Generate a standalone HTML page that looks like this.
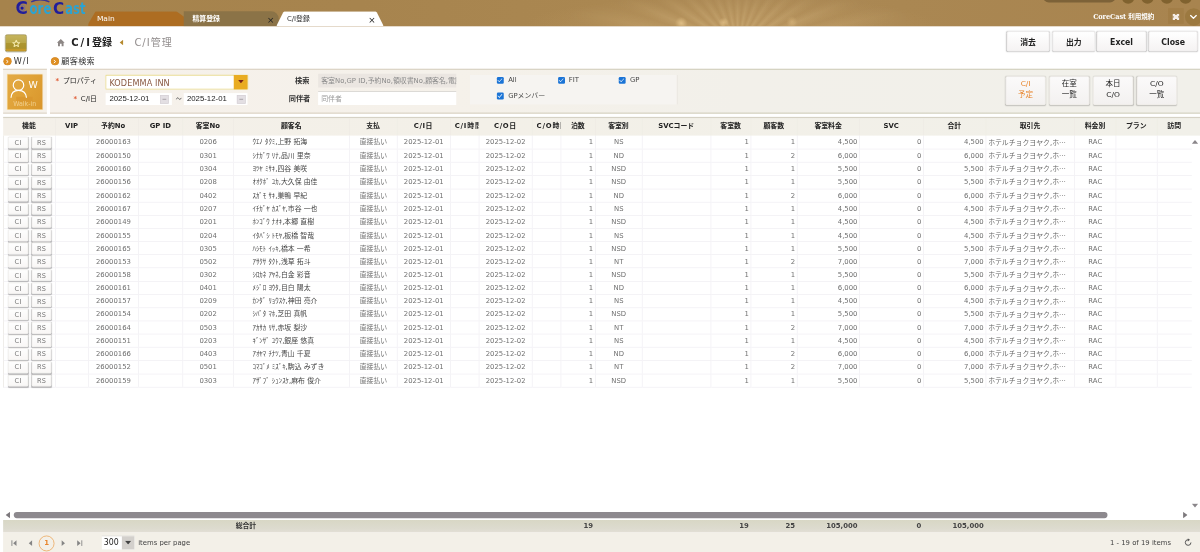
<!DOCTYPE html>
<html lang="ja">
<head>
<meta charset="utf-8">
<title>C/I登録</title>
<style>
*{box-sizing:border-box;margin:0;padding:0}
html,body{width:1200px;height:552px;overflow:hidden;background:#fff}
body{font-family:"DejaVu Sans","Liberation Sans","Noto Sans CJK JP",sans-serif;font-size:11px;color:#333}
#app{position:absolute;left:0;top:0;width:1920px;height:883.2px;transform:scale(.625);transform-origin:0 0;background:#fff;overflow:hidden}
.abs{position:absolute}
/* ---------- header ---------- */
#hdr{position:absolute;left:0;top:0;width:1920px;height:42px;background:#a8854f;overflow:hidden}
#hdr .glow{position:absolute;left:0;top:0;width:1920px;height:42px;background:
 radial-gradient(circle 10px at 1090px 37px,rgba(232,198,140,.75),rgba(232,198,140,0) 100%),
 radial-gradient(circle 8px at 1158px 36px,rgba(232,198,140,.7),rgba(232,198,140,0) 100%),
 radial-gradient(circle 9px at 1267px 35px,rgba(222,188,130,.55),rgba(222,188,130,0) 100%),
 radial-gradient(ellipse 330px 46px at 1170px 40px,rgba(196,160,104,.55),rgba(196,160,104,0) 100%),
 linear-gradient(90deg,#a6834c 0,#a7844e 30%,#aa8751 50%,#ac8955 62%,#aa8752 75%,#a8844f 100%)}
#hdr .rays{position:absolute;left:860px;top:0;width:640px;height:42px;background:repeating-conic-gradient(from -82deg at 320px 78px,rgba(255,232,180,0) 0deg,rgba(255,232,180,.16) 5deg,rgba(255,232,180,0) 11deg);-webkit-mask-image:radial-gradient(ellipse 300px 60px at 320px 42px,#000 0,rgba(0,0,0,.6) 50%,transparent 100%);mask-image:radial-gradient(ellipse 300px 60px at 320px 42px,#000 0,rgba(0,0,0,.6) 50%,transparent 100%)}
.tab{position:absolute;top:18px;height:24px;color:#fff;font-size:11px;line-height:24px}
#tab1{left:141px;width:154px;background:#ad6d22;font-size:12px;clip-path:polygon(0 100%,0 85%,12px 0,141px 0,154px 38%,154px 100%)}
#tab1 span{position:absolute;left:14px;top:0}
#tab2{left:294px;width:152px;background:#8b7347;border-radius:0 12px 0 0}
#tab2 span{position:absolute;left:14px;top:0;font-weight:bold}
#tab3{left:442px;width:172px;background:#fff;color:#333;clip-path:polygon(0 100%,11px 2px,13px 0,159px 0,161px 2px,100% 100%)}
#tab3 span{position:absolute;left:17px;top:0}
.tab i{position:absolute;top:1.5px;font-style:normal;font-size:14px;color:#222;font-weight:normal}
#hdr .terms{position:absolute;left:1749px;top:19px;color:#fff;font-weight:bold;font-size:10.5px;letter-spacing:-.1px;line-height:16px;white-space:nowrap;font-family:"DejaVu Serif","Liberation Serif","Noto Sans CJK JP",serif}
/* ---------- title row ---------- */
#star{position:absolute;left:8px;top:55px;width:35px;height:27.5px;border-radius:3.5px;background:linear-gradient(#c5b45f 0,#bba849 47%,#ad9631 52%,#ab922d 82%,#c4992a 88%,#c4992a 100%);border:1px solid #8f7f3a;box-shadow:0 1px 1px rgba(0,0,0,.2)}
#title{position:absolute;left:114px;top:57px;font-size:16px;font-weight:bold;color:#222;line-height:24px;white-space:nowrap;letter-spacing:0}
#sub{position:absolute;left:215px;top:57px;font-size:16px;color:#928d8d;line-height:24px;white-space:nowrap;letter-spacing:1.6px}
.tbtn{position:absolute;top:50px;height:32px;border:1px solid #e8e6e6;border-radius:3px;background:linear-gradient(#fff,#f5f3f3);box-shadow:0 1px 2px rgba(0,0,0,.26);font-weight:bold;font-size:12.5px;line-height:33.6px;overflow:hidden;text-align:center;color:#222}
/* ---------- links row ---------- */
.lnk{position:absolute;top:89.5px;height:18px;line-height:18px;font-size:13px;color:#333;white-space:nowrap}
.dot{position:absolute;top:92px;width:12px;height:12px;border-radius:50%;background:#df8f22;box-shadow:0 0 0 .5px #c98224}
/* ---------- search panel ---------- */
.panel{position:absolute;top:110.4px;height:71.9px;background:#f5f1ea;border-top:2px solid #dad4ca;border-bottom:2px solid #ddd8ce}
.lab{position:absolute;font-size:11.5px;font-weight:bold;color:#333;white-space:nowrap;line-height:16px}
.lab.n{font-weight:normal;font-size:11px;color:#222;text-align:right;width:100px}
.lab em{font-style:normal;color:#e0603a;margin-right:6px;font-weight:bold}
.inp{position:absolute;background:#fff;font-size:12px;line-height:20px;color:#333;white-space:nowrap;overflow:hidden}
.cb{position:absolute;width:11px;height:11px;border-radius:2px;background:#1b74d6}
.cb:after{content:"";position:absolute;left:3.4px;top:1.2px;width:3px;height:5.6px;border:solid #fff;border-width:0 1.6px 1.6px 0;transform:rotate(42deg)}
.cbl{position:absolute;font-size:11px;color:#444;line-height:14px;white-space:nowrap}
.pbtn{position:absolute;top:122px;width:64px;height:46px;border:1px solid #efece9;border-radius:3px;background:linear-gradient(#fbfafa,#f3f1f0);box-shadow:0 1px 2px rgba(0,0,0,.22);font-size:12px;line-height:17.6px;text-align:center;color:#222;padding-top:2px}
/* ---------- grid ---------- */
#grid{position:absolute;left:5px;top:186.7px;width:1915px;height:697.3px}
#gh{position:absolute;left:0;top:0;width:1915px;height:30.8px;background:linear-gradient(90deg,#f4f0e9 0,#f3f0e8 40%,#f1f0e9 100%);border-top:2px solid #d6d2c5;overflow:hidden}
table{border-collapse:collapse;table-layout:fixed;width:1901px}
th{height:28.8px;font-size:11px;font-weight:bold;color:#222;text-align:center;white-space:nowrap;overflow:hidden;border-left:1px solid #eeebe4;padding:0 4px;vertical-align:middle}
th:first-child{border-left:none}
th.clip{padding:0 0 0 7px;text-align:left}
th.clip span{letter-spacing:1.3px}
th span{display:block;overflow:hidden;white-space:nowrap;position:relative;top:-.8px;line-height:16px;height:16px}
#gb{position:absolute;left:0;top:30.8px;width:1901px}
td{height:21.15px;font-size:11px;color:#707070;white-space:nowrap;overflow:hidden;border-left:1px solid #eeecf1;border-bottom:1px solid #eeecf1;padding:0 6px;line-height:19px}
td.c{text-align:center}
td.r{text-align:right;padding-right:3px}
td.nm{padding-left:30px;padding-right:0;color:#444;font-size:11px}
td.tk{padding-left:3px;padding-right:0;color:#666}
td.tk i{font-style:normal;font-family:'Noto Sans CJK JP',sans-serif}
td.fn{overflow:visible;padding:0 0 0 7.4px;border-left:1px solid #e6e3de;letter-spacing:.6px}
.gb{display:inline-block;width:31.5px;height:18.5px;margin:.6px 6px 0 0;border:1px solid #edebe9;border-radius:2px;background:linear-gradient(#fefefe,#f9f7f6);box-shadow:0 1.5px 1.5px rgba(0,0,0,.26);font-weight:normal;font-size:10.5px;line-height:17px;text-align:center;color:#777;vertical-align:top}
/* footer */
#hs{position:absolute;left:0;top:818px;width:1920px;height:12px;background:#fff}
#hs .th{position:absolute;left:22px;top:1px;width:1750px;height:10px;border-radius:5px;background:#8d898e}
#tot{position:absolute;left:5px;top:831.6px;width:1915px;height:20.4px;background:linear-gradient(#d8d7c5,#dddbcf 70%,#e3dfd6)}
#tot td{height:20px;border:none;font-weight:bold;color:#444;line-height:18px}
#pg{position:absolute;left:5px;top:852px;width:1915px;height:33px;background:#f3f0e8}
</style>
</head>
<body>
<div id="app">

<div id="hdr">
  <div class="glow"></div><div class="rays"></div>
  <!-- top-right decoration -->
  <div class="abs" style="left:1669px;top:-14px;width:116px;height:18px;border-radius:9px;background:#7d6238"></div>
  <div class="abs" style="left:1795px;top:-14px;width:20px;height:20px;border-radius:50%;background:#80622f"></div>
  <div class="abs" style="left:1826px;top:-14px;width:20px;height:20px;border-radius:50%;background:#80622f"></div>
  <div class="abs" style="left:1857px;top:-14px;width:20px;height:20px;border-radius:50%;background:#80622f"></div>
  <div class="abs" style="left:1887px;top:-14px;width:20px;height:20px;border-radius:50%;background:#80622f"></div>
  <!-- logo -->
  <svg class="abs" style="left:0;top:0" width="150" height="28" viewBox="0 0 150 28">
    <path d="M50 3 Q64 -3.5 79 3" fill="none" stroke="#3d3390" stroke-width="2.4"/>
    <text transform="translate(24.6,22.6) scale(1.0,1)" font-family="'DejaVu Sans','Liberation Sans',sans-serif" font-weight="bold" font-size="27" fill="#211d9b">C</text>
    <circle cx="35.3" cy="12.8" r="4.6" fill="none" stroke="#6d68a8" stroke-width="1.2"/>
    <circle cx="35.3" cy="12.8" r="2.6" fill="#1a169e"/>
    <text transform="translate(47.2,22.3) scale(.77,1)" font-family="'DejaVu Sans','Liberation Sans',sans-serif" font-weight="bold" font-size="24.5" fill="#2ba3d2">ore</text>
    <text transform="translate(84.8,22.4) scale(.92,1)" font-family="'DejaVu Sans','Liberation Sans',sans-serif" font-weight="bold" font-size="26.5" fill="#211d9b">C</text>
    <text transform="translate(104.3,22.3) scale(.76,1)" font-family="'DejaVu Sans','Liberation Sans',sans-serif" font-weight="bold" font-size="24.5" fill="#2ba3d2">ast</text>
  </svg>
  <div class="tab" id="tab1"><span>Main</span></div>
  <div class="tab" id="tab2"><span>精算登録</span><i style="left:133px">×</i></div>
  <div class="tab" id="tab3"><span>C/I登録</span><i style="left:147px">×</i></div>
  <div class="terms">CoreCast 利用規約</div>
  <div class="abs" style="left:1869px;top:13px;width:25px;height:25px;background:rgba(120,85,20,.12)"></div>
  <svg class="abs" style="left:1876px;top:22px" width="11" height="10" viewBox="0 0 11 10"><rect x="0" y="0" width="11" height="10" rx="1" fill="#f4ece6"/><rect x="4" y="0" width="3" height="1.6" fill="#9b7840"/><rect x="4" y="8.4" width="3" height="1.6" fill="#9b7840"/><rect x="0" y="3.6" width="1.6" height="2.8" fill="#9b7840"/><rect x="9.4" y="3.6" width="1.6" height="2.8" fill="#9b7840"/></svg>
  <div class="abs" style="left:1896px;top:13px;width:28px;height:28px;border-radius:50%;background:#9c7940"></div>
  <svg class="abs" style="left:1903px;top:23px" width="13" height="9" viewBox="0 0 14 10"><path d="M2 2 L7 7 L12 2" fill="none" stroke="#fff" stroke-width="2.2" stroke-linecap="round" stroke-linejoin="round"/></svg>
</div>

<!-- title row -->
<div id="star"><svg class="abs" style="left:10px;top:7px" width="14" height="13" viewBox="0 0 16 16" preserveAspectRatio="none"><path d="M8 1.8 L9.9 6 L14.4 6.5 L11 9.5 L12 14 L8 11.7 L4 14 L5 9.5 L1.6 6.5 L6.1 6 Z" fill="none" stroke="#f3e9ad" stroke-width="1.9" stroke-linejoin="round"/></svg></div>
<svg class="abs" style="left:90px;top:60.5px" width="14.5" height="14.5" viewBox="0 0 14 14"><path d="M1 7.2 L7 1.5 L13 7.2 L11.3 7.2 L11.3 12.5 L8.3 12.5 L8.3 8.8 L5.7 8.8 L5.7 12.5 L2.7 12.5 L2.7 7.2 Z" fill="#8d8785"/></svg>
<div id="title"><span style="letter-spacing:3.2px">C/I</span>登録</div>
<svg class="abs" style="left:190px;top:62px" width="8" height="12" viewBox="0 0 8 12"><path d="M7 1.5 L1.5 6 L7 10.5 Z" fill="#b5892e"/></svg>
<div id="sub">C/I管理</div>
<div class="tbtn" style="left:1611px;width:68px">消去</div>
<div class="tbtn" style="left:1684px;width:68px">出力</div>
<div class="tbtn" style="left:1755px;width:79px">Excel</div>
<div class="tbtn" style="left:1838px;width:78px">Close</div>

<!-- links row -->
<div class="dot" style="left:5.5px"><svg class="abs" style="left:2.5px;top:2.5px" width="7" height="7" viewBox="0 0 7 7"><path d="M2 1 L5 3.5 L2 6" fill="none" stroke="#fff" stroke-width="1.5"/></svg></div>
<div class="lnk" style="left:22px;letter-spacing:1.4px">W/I</div>
<div class="dot" style="left:81.5px"><svg class="abs" style="left:2.5px;top:2.5px" width="7" height="7" viewBox="0 0 7 7"><path d="M2 1 L5 3.5 L2 6" fill="none" stroke="#fff" stroke-width="1.5"/></svg></div>
<div class="lnk" style="left:98px;letter-spacing:.5px">顧客検索</div>

<!-- search panel -->
<div class="panel" style="left:5px;width:70px;border-top-color:#e0d6c7;border-bottom-color:#e0d8cc"></div>
<div class="panel" style="left:80px;width:1840px;background:linear-gradient(90deg,#f6f1eb 0,#f5f1ea 35%,#f2f0ea 60%,#f1f0ea 100%);border-width:2px 0;border-style:solid;border-image:linear-gradient(90deg,#e0d6c8 0,#dcd5c7 30%,#d5d3c2 60%,#d6d4c4 100%) 1"></div>
<div class="abs" id="wi" style="left:11.5px;top:118.5px;width:56px;height:56px;box-shadow:0 0 0 1px #f9e6b4;background:linear-gradient(120deg,#e3aa44 0,#dfa136 55%,#d9962c 100%);">
  <svg class="abs" style="left:0;top:0" width="56" height="56" viewBox="0 0 56 56"><rect x="14" y="36" width="26" height="8" fill="#d8942c" opacity=".7"/><circle cx="17.6" cy="17.2" r="8.4" fill="none" stroke="#fff" stroke-width="1.9"/><path d="M5.6 37.5 C6 28.5 11 25.6 17.6 25.6 C24.2 25.6 29.6 28.5 30.4 37.5" fill="none" stroke="#fff" stroke-width="1.9"/></svg>
  <div class="abs" style="left:34px;top:6px;font-size:15px;line-height:20px;color:#fff">W</div>
  <div class="abs" style="left:0;top:40px;width:56px;text-align:center;font-size:10px;line-height:14px;color:#f1cf8e">Walk-in</div>
</div>

<div class="lab n" style="left:55px;top:121px"><em>*</em>プロパティ</div>
<div class="lab n" style="left:55px;top:150px"><em>*</em>C/I日</div>
<div class="inp" style="left:169px;top:120px;width:227px;height:23px;border:1px solid #e6d680;box-shadow:0 0 2px #e8da8c;padding-left:5px;font-size:13px;line-height:23px;letter-spacing:.15px;color:#8a5a44">KODEMMA INN</div>
<div class="abs" style="left:374px;top:120px;width:22px;height:22.5px;background:#e9ac22"><svg class="abs" style="left:6.5px;top:8px" width="9" height="5.4" viewBox="0 0 10 6"><path d="M0 0 H10 L5 6 Z" fill="#7a2318"/></svg></div>
<div class="inp" style="left:169px;top:149px;width:106px;height:19px;padding-left:6px;font-family:'Liberation Sans',sans-serif;font-size:12.5px;line-height:19px;color:#222">2025-12-01</div>
<div class="abs" style="left:256px;top:152px;width:14px;height:14px;background:#e3dfe3;border:1px solid #d5d0d5"><div class="abs" style="left:3px;top:5px;width:6px;height:1.5px;background:#b5b0b5"></div></div>
<svg class="abs" style="left:281px;top:155px" width="10" height="6" viewBox="0 0 10 6"><path d="M1 4 C2.5 0.5 4 1 5 2.8 C6 4.6 7.5 5 9 1.6" fill="none" stroke="#555" stroke-width="1.3"/></svg>
<div class="inp" style="left:294px;top:149px;width:102px;height:19px;padding-left:5px;font-family:'Liberation Sans',sans-serif;font-size:12.5px;line-height:19px;color:#222">2025-12-01</div>
<div class="abs" style="left:379px;top:152px;width:14px;height:14px;background:#e3dfe3;border:1px solid #d5d0d5"><div class="abs" style="left:3px;top:5px;width:6px;height:1.5px;background:#b5b0b5"></div></div>

<div class="lab" style="left:472px;top:121px">検索</div>
<div class="lab" style="left:462px;top:150px">同伴者</div>
<div class="inp" style="left:509px;top:118px;width:221px;height:22px;background:#ebe6e1;color:#8a8a8a;font-size:11px;line-height:22px;padding-left:5px">客室No,GP ID,予約No,領収書No,顧客名,電話番号</div>
<div class="inp" style="left:509px;top:146px;width:221px;height:22px;color:#999;font-size:11px;line-height:22px;padding-left:5px;border-top:1px solid #c9c5c0">同伴者</div>

<div class="abs" style="left:752px;top:120px;width:332px;height:47px;background:#f6f4f1;border-right:1px solid #e4e0d8"></div>
<div class="cb" style="left:795px;top:123px"></div><div class="cbl" style="left:813px;top:121px">All</div>
<div class="cb" style="left:893px;top:123px"></div><div class="cbl" style="left:910px;top:121px">FIT</div>
<div class="cb" style="left:990px;top:123px"></div><div class="cbl" style="left:1008px;top:121px">GP</div>
<div class="cb" style="left:795px;top:148px"></div><div class="cbl" style="left:813px;top:147px">GPメンバー</div>

<div class="pbtn" style="left:1609px;color:#e8862e">C/I<br>予定</div>
<div class="pbtn" style="left:1679px">在室<br>一覧</div>
<div class="pbtn" style="left:1749px">本日<br>C/O</div>
<div class="pbtn" style="left:1819px">C/O<br>一覧</div>

<!-- grid -->
<div id="grid">
  <div id="gh"><table><colgroup><col style="width:83px"><col style="width:53px"><col style="width:80px"><col style="width:71px"><col style="width:81px"><col style="width:186px"><col style="width:76px"><col style="width:85px"><col style="width:46px"><col style="width:85px"><col style="width:46px"><col style="width:55px"><col style="width:75px"><col style="width:110px"><col style="width:64px"><col style="width:74px"><col style="width:100px"><col style="width:102px"><col style="width:100px"><col style="width:142px"><col style="width:66px"><col style="width:66px"><col style="width:55px"></colgroup><tr><th><span>機能</span></th><th><span>VIP</span></th><th><span>予約No</span></th><th><span>GP ID</span></th><th><span>客室No</span></th><th><span>顧客名</span></th><th><span>支払</span></th><th><span style="letter-spacing:.9px">C/I日</span></th><th class="clip"><span>C/I時間</span></th><th><span style="letter-spacing:.9px">C/O日</span></th><th class="clip"><span>C/O時間</span></th><th><span>泊数</span></th><th><span>客室別</span></th><th><span>SVCコード</span></th><th><span>客室数</span></th><th><span>顧客数</span></th><th><span>客室料金</span></th><th><span>SVC</span></th><th><span>合計</span></th><th><span>取引先</span></th><th><span>料金別</span></th><th><span>プラン</span></th><th><span>訪問</span></th></tr></table></div>
  <div id="gb"><table><colgroup><col style="width:83px"><col style="width:53px"><col style="width:80px"><col style="width:71px"><col style="width:81px"><col style="width:186px"><col style="width:76px"><col style="width:85px"><col style="width:46px"><col style="width:85px"><col style="width:46px"><col style="width:55px"><col style="width:75px"><col style="width:110px"><col style="width:64px"><col style="width:74px"><col style="width:100px"><col style="width:102px"><col style="width:100px"><col style="width:142px"><col style="width:66px"><col style="width:66px"><col style="width:55px"></colgroup>
<tr><td class="fn"><b class="gb">CI</b><b class="gb">RS</b></td><td></td><td class="c">26000163</td><td></td><td class="c">0206</td><td class="nm">ｳｴﾉ ﾀｸﾐ,上野 拓海</td><td class="c">直接払い</td><td class="c">2025-12-01</td><td></td><td class="c">2025-12-02</td><td></td><td class="r">1</td><td class="c">NS</td><td></td><td class="r">1</td><td class="r">1</td><td class="r">4,500</td><td class="r">0</td><td class="r">4,500</td><td class="tk">ホテルチョクヨヤク,ホ<i>…</i></td><td class="c">RAC</td><td></td><td></td></tr>
<tr><td class="fn"><b class="gb">CI</b><b class="gb">RS</b></td><td></td><td class="c">26000150</td><td></td><td class="c">0301</td><td class="nm">ｼﾅｶﾞﾜ ﾘﾅ,品川 里奈</td><td class="c">直接払い</td><td class="c">2025-12-01</td><td></td><td class="c">2025-12-02</td><td></td><td class="r">1</td><td class="c">ND</td><td></td><td class="r">1</td><td class="r">2</td><td class="r">6,000</td><td class="r">0</td><td class="r">6,000</td><td class="tk">ホテルチョクヨヤク,ホ<i>…</i></td><td class="c">RAC</td><td></td><td></td></tr>
<tr><td class="fn"><b class="gb">CI</b><b class="gb">RS</b></td><td></td><td class="c">26000160</td><td></td><td class="c">0304</td><td class="nm">ﾖﾂﾔ ﾐｻｷ,四谷 美咲</td><td class="c">直接払い</td><td class="c">2025-12-01</td><td></td><td class="c">2025-12-02</td><td></td><td class="r">1</td><td class="c">NSD</td><td></td><td class="r">1</td><td class="r">1</td><td class="r">5,500</td><td class="r">0</td><td class="r">5,500</td><td class="tk">ホテルチョクヨヤク,ホ<i>…</i></td><td class="c">RAC</td><td></td><td></td></tr>
<tr><td class="fn"><b class="gb">CI</b><b class="gb">RS</b></td><td></td><td class="c">26000156</td><td></td><td class="c">0208</td><td class="nm">ｵｵｸﾎﾞ ﾕｶ,大久保 由佳</td><td class="c">直接払い</td><td class="c">2025-12-01</td><td></td><td class="c">2025-12-02</td><td></td><td class="r">1</td><td class="c">NSD</td><td></td><td class="r">1</td><td class="r">1</td><td class="r">5,500</td><td class="r">0</td><td class="r">5,500</td><td class="tk">ホテルチョクヨヤク,ホ<i>…</i></td><td class="c">RAC</td><td></td><td></td></tr>
<tr><td class="fn"><b class="gb">CI</b><b class="gb">RS</b></td><td></td><td class="c">26000162</td><td></td><td class="c">0402</td><td class="nm">ｽｶﾞﾓ ｻｷ,巣鴨 早紀</td><td class="c">直接払い</td><td class="c">2025-12-01</td><td></td><td class="c">2025-12-02</td><td></td><td class="r">1</td><td class="c">ND</td><td></td><td class="r">1</td><td class="r">2</td><td class="r">6,000</td><td class="r">0</td><td class="r">6,000</td><td class="tk">ホテルチョクヨヤク,ホ<i>…</i></td><td class="c">RAC</td><td></td><td></td></tr>
<tr><td class="fn"><b class="gb">CI</b><b class="gb">RS</b></td><td></td><td class="c">26000167</td><td></td><td class="c">0207</td><td class="nm">ｲﾁｶﾞﾔ ｶｽﾞﾔ,市谷 一也</td><td class="c">直接払い</td><td class="c">2025-12-01</td><td></td><td class="c">2025-12-02</td><td></td><td class="r">1</td><td class="c">NS</td><td></td><td class="r">1</td><td class="r">1</td><td class="r">4,500</td><td class="r">0</td><td class="r">4,500</td><td class="tk">ホテルチョクヨヤク,ホ<i>…</i></td><td class="c">RAC</td><td></td><td></td></tr>
<tr><td class="fn"><b class="gb">CI</b><b class="gb">RS</b></td><td></td><td class="c">26000149</td><td></td><td class="c">0201</td><td class="nm">ﾎﾝｺﾞｳ ﾅｵｷ,本郷 直樹</td><td class="c">直接払い</td><td class="c">2025-12-01</td><td></td><td class="c">2025-12-02</td><td></td><td class="r">1</td><td class="c">NSD</td><td></td><td class="r">1</td><td class="r">1</td><td class="r">4,500</td><td class="r">0</td><td class="r">4,500</td><td class="tk">ホテルチョクヨヤク,ホ<i>…</i></td><td class="c">RAC</td><td></td><td></td></tr>
<tr><td class="fn"><b class="gb">CI</b><b class="gb">RS</b></td><td></td><td class="c">26000155</td><td></td><td class="c">0204</td><td class="nm">ｲﾀﾊﾞｼ ﾄﾓﾔ,板橋 智哉</td><td class="c">直接払い</td><td class="c">2025-12-01</td><td></td><td class="c">2025-12-02</td><td></td><td class="r">1</td><td class="c">NS</td><td></td><td class="r">1</td><td class="r">1</td><td class="r">4,500</td><td class="r">0</td><td class="r">4,500</td><td class="tk">ホテルチョクヨヤク,ホ<i>…</i></td><td class="c">RAC</td><td></td><td></td></tr>
<tr><td class="fn"><b class="gb">CI</b><b class="gb">RS</b></td><td></td><td class="c">26000165</td><td></td><td class="c">0305</td><td class="nm">ﾊｼﾓﾄ ｲｯｷ,橋本 一希</td><td class="c">直接払い</td><td class="c">2025-12-01</td><td></td><td class="c">2025-12-02</td><td></td><td class="r">1</td><td class="c">NSD</td><td></td><td class="r">1</td><td class="r">1</td><td class="r">5,500</td><td class="r">0</td><td class="r">5,500</td><td class="tk">ホテルチョクヨヤク,ホ<i>…</i></td><td class="c">RAC</td><td></td><td></td></tr>
<tr><td class="fn"><b class="gb">CI</b><b class="gb">RS</b></td><td></td><td class="c">26000153</td><td></td><td class="c">0502</td><td class="nm">ｱｻｸｻ ﾀｸﾄ,浅草 拓斗</td><td class="c">直接払い</td><td class="c">2025-12-01</td><td></td><td class="c">2025-12-02</td><td></td><td class="r">1</td><td class="c">NT</td><td></td><td class="r">1</td><td class="r">2</td><td class="r">7,000</td><td class="r">0</td><td class="r">7,000</td><td class="tk">ホテルチョクヨヤク,ホ<i>…</i></td><td class="c">RAC</td><td></td><td></td></tr>
<tr><td class="fn"><b class="gb">CI</b><b class="gb">RS</b></td><td></td><td class="c">26000158</td><td></td><td class="c">0302</td><td class="nm">ｼﾛｶﾈ ｱﾔﾈ,白金 彩音</td><td class="c">直接払い</td><td class="c">2025-12-01</td><td></td><td class="c">2025-12-02</td><td></td><td class="r">1</td><td class="c">NSD</td><td></td><td class="r">1</td><td class="r">1</td><td class="r">5,500</td><td class="r">0</td><td class="r">5,500</td><td class="tk">ホテルチョクヨヤク,ホ<i>…</i></td><td class="c">RAC</td><td></td><td></td></tr>
<tr><td class="fn"><b class="gb">CI</b><b class="gb">RS</b></td><td></td><td class="c">26000161</td><td></td><td class="c">0401</td><td class="nm">ﾒｼﾞﾛ ﾖｳﾀ,目白 陽太</td><td class="c">直接払い</td><td class="c">2025-12-01</td><td></td><td class="c">2025-12-02</td><td></td><td class="r">1</td><td class="c">ND</td><td></td><td class="r">1</td><td class="r">1</td><td class="r">6,000</td><td class="r">0</td><td class="r">6,000</td><td class="tk">ホテルチョクヨヤク,ホ<i>…</i></td><td class="c">RAC</td><td></td><td></td></tr>
<tr><td class="fn"><b class="gb">CI</b><b class="gb">RS</b></td><td></td><td class="c">26000157</td><td></td><td class="c">0209</td><td class="nm">ｶﾝﾀﾞ ﾘｮｳｽｹ,神田 亮介</td><td class="c">直接払い</td><td class="c">2025-12-01</td><td></td><td class="c">2025-12-02</td><td></td><td class="r">1</td><td class="c">NS</td><td></td><td class="r">1</td><td class="r">1</td><td class="r">4,500</td><td class="r">0</td><td class="r">4,500</td><td class="tk">ホテルチョクヨヤク,ホ<i>…</i></td><td class="c">RAC</td><td></td><td></td></tr>
<tr><td class="fn"><b class="gb">CI</b><b class="gb">RS</b></td><td></td><td class="c">26000154</td><td></td><td class="c">0202</td><td class="nm">ｼﾊﾞﾀ ﾏﾎ,芝田 真帆</td><td class="c">直接払い</td><td class="c">2025-12-01</td><td></td><td class="c">2025-12-02</td><td></td><td class="r">1</td><td class="c">NSD</td><td></td><td class="r">1</td><td class="r">1</td><td class="r">5,500</td><td class="r">0</td><td class="r">5,500</td><td class="tk">ホテルチョクヨヤク,ホ<i>…</i></td><td class="c">RAC</td><td></td><td></td></tr>
<tr><td class="fn"><b class="gb">CI</b><b class="gb">RS</b></td><td></td><td class="c">26000164</td><td></td><td class="c">0503</td><td class="nm">ｱｶｻｶ ﾘｻ,赤坂 梨沙</td><td class="c">直接払い</td><td class="c">2025-12-01</td><td></td><td class="c">2025-12-02</td><td></td><td class="r">1</td><td class="c">NT</td><td></td><td class="r">1</td><td class="r">2</td><td class="r">7,000</td><td class="r">0</td><td class="r">7,000</td><td class="tk">ホテルチョクヨヤク,ホ<i>…</i></td><td class="c">RAC</td><td></td><td></td></tr>
<tr><td class="fn"><b class="gb">CI</b><b class="gb">RS</b></td><td></td><td class="c">26000151</td><td></td><td class="c">0203</td><td class="nm">ｷﾞﾝｻﾞ ﾕｳﾏ,銀座 悠真</td><td class="c">直接払い</td><td class="c">2025-12-01</td><td></td><td class="c">2025-12-02</td><td></td><td class="r">1</td><td class="c">NS</td><td></td><td class="r">1</td><td class="r">1</td><td class="r">4,500</td><td class="r">0</td><td class="r">4,500</td><td class="tk">ホテルチョクヨヤク,ホ<i>…</i></td><td class="c">RAC</td><td></td><td></td></tr>
<tr><td class="fn"><b class="gb">CI</b><b class="gb">RS</b></td><td></td><td class="c">26000166</td><td></td><td class="c">0403</td><td class="nm">ｱｵﾔﾏ ﾁﾅﾂ,青山 千夏</td><td class="c">直接払い</td><td class="c">2025-12-01</td><td></td><td class="c">2025-12-02</td><td></td><td class="r">1</td><td class="c">ND</td><td></td><td class="r">1</td><td class="r">2</td><td class="r">6,000</td><td class="r">0</td><td class="r">6,000</td><td class="tk">ホテルチョクヨヤク,ホ<i>…</i></td><td class="c">RAC</td><td></td><td></td></tr>
<tr><td class="fn"><b class="gb">CI</b><b class="gb">RS</b></td><td></td><td class="c">26000152</td><td></td><td class="c">0501</td><td class="nm">ｺﾏｺﾞﾒ ﾐｽﾞｷ,駒込 みずき</td><td class="c">直接払い</td><td class="c">2025-12-01</td><td></td><td class="c">2025-12-02</td><td></td><td class="r">1</td><td class="c">NT</td><td></td><td class="r">1</td><td class="r">2</td><td class="r">7,000</td><td class="r">0</td><td class="r">7,000</td><td class="tk">ホテルチョクヨヤク,ホ<i>…</i></td><td class="c">RAC</td><td></td><td></td></tr>
<tr><td class="fn"><b class="gb">CI</b><b class="gb">RS</b></td><td></td><td class="c">26000159</td><td></td><td class="c">0303</td><td class="nm">ｱｻﾞﾌﾞ ｼｭﾝｽｹ,麻布 俊介</td><td class="c">直接払い</td><td class="c">2025-12-01</td><td></td><td class="c">2025-12-02</td><td></td><td class="r">1</td><td class="c">NSD</td><td></td><td class="r">1</td><td class="r">1</td><td class="r">5,500</td><td class="r">0</td><td class="r">5,500</td><td class="tk">ホテルチョクヨヤク,ホ<i>…</i></td><td class="c">RAC</td><td></td><td></td></tr>
</table></div>
  <svg class="abs" style="left:1901px;top:36px" width="12" height="8" viewBox="0 0 12 8"><path d="M1 7 L6 1 L11 7 Z" fill="#8a868a"/></svg>
  <svg class="abs" style="left:1901px;top:618px" width="12" height="8" viewBox="0 0 12 8"><path d="M1 1 L6 7 L11 1 Z" fill="#8a868a"/></svg>
</div>

<div id="hs"><svg class="abs" style="left:9px;top:1px" width="8" height="10" viewBox="0 0 8 10"><path d="M7 0 L0 5 L7 10 Z" fill="#7d797d"/></svg><div class="th"></div><svg class="abs" style="left:1892px;top:1px" width="8" height="10" viewBox="0 0 8 10"><path d="M1 0 L8 5 L1 10 Z" fill="#7d797d"/></svg></div>
<div id="tot"><table><colgroup><col style="width:83px"><col style="width:53px"><col style="width:80px"><col style="width:71px"><col style="width:81px"><col style="width:186px"><col style="width:76px"><col style="width:85px"><col style="width:46px"><col style="width:85px"><col style="width:46px"><col style="width:55px"><col style="width:75px"><col style="width:110px"><col style="width:64px"><col style="width:74px"><col style="width:100px"><col style="width:102px"><col style="width:100px"><col style="width:142px"><col style="width:66px"><col style="width:66px"><col style="width:55px"></colgroup><tr><td class="r"></td><td class="r"></td><td class="r"></td><td class="r"></td><td class="r"></td><td class="r"></td><td class="r"></td><td class="r"></td><td class="r"></td><td class="r"></td><td class="r"></td><td class="r">19</td><td class="r"></td><td class="r"></td><td class="r">19</td><td class="r">25</td><td class="r">105,000</td><td class="r">0</td><td class="r">105,000</td><td class="r"></td><td class="r"></td><td class="r"></td><td class="r"></td></tr></table>
  <div class="abs" style="left:372px;top:1px;font-weight:bold;font-size:11px;line-height:18px;color:#333">総合計</div>
</div>
<div id="pg">
  <svg class="abs" style="left:13px;top:12px" width="9" height="10" viewBox="0 0 9 10"><rect x="0" y="0.5" width="1.8" height="9" fill="#858585"/><path d="M8.5 0.5 L3 5 L8.5 9.5 Z" fill="#858585"/></svg>
  <svg class="abs" style="left:40px;top:12px" width="7" height="10" viewBox="0 0 7 10"><path d="M6.5 0.5 L1 5 L6.5 9.5 Z" fill="#858585"/></svg>
  <div class="abs" style="left:57px;top:5px;width:25px;height:25px;border:1.5px solid #e8953a;border-radius:50%;text-align:center;font-weight:bold;font-size:11px;line-height:22px;color:#e8862e">1</div>
  <svg class="abs" style="left:92.5px;top:12px" width="7" height="10" viewBox="0 0 7 10"><path d="M0.5 0.5 L6 5 L0.5 9.5 Z" fill="#858585"/></svg>
  <svg class="abs" style="left:118px;top:12px" width="9" height="10" viewBox="0 0 9 10"><path d="M0.5 0.5 L6 5 L0.5 9.5 Z" fill="#858585"/><rect x="7.2" y="0.5" width="1.8" height="9" fill="#858585"/></svg>
  <div class="abs" style="left:158px;top:5px;width:52px;height:22px;background:#fff;border-top:1px solid #d5d1cb"></div>
  <div class="abs" style="left:190px;top:6px;width:20px;height:21px;background:#d3d0cc"><svg class="abs" style="left:5px;top:7px" width="10" height="6" viewBox="0 0 10 6"><path d="M0 0 H10 L5 6 Z" fill="#444"/></svg></div>
  <div class="abs" style="left:161px;top:6px;font-size:12.5px;line-height:20px;color:#222">300</div>
  <div class="abs" style="left:216px;top:7px;font-size:11px;line-height:20px;color:#444">items per page</div>
  <div class="abs" style="left:1771px;top:7px;font-size:11px;line-height:20px;color:#444;white-space:nowrap">1 - 19 of 19 items</div>
  <svg class="abs" style="left:1889px;top:9px" width="14" height="14" viewBox="0 0 14 14"><path d="M11.5 7 A4.5 4.5 0 1 1 7 2.5" fill="none" stroke="#555" stroke-width="1.6"/><path d="M6.5 0 L10 2.6 L6.5 5.2 Z" fill="#555"/></svg>
</div>

</div>
</body>
</html>
